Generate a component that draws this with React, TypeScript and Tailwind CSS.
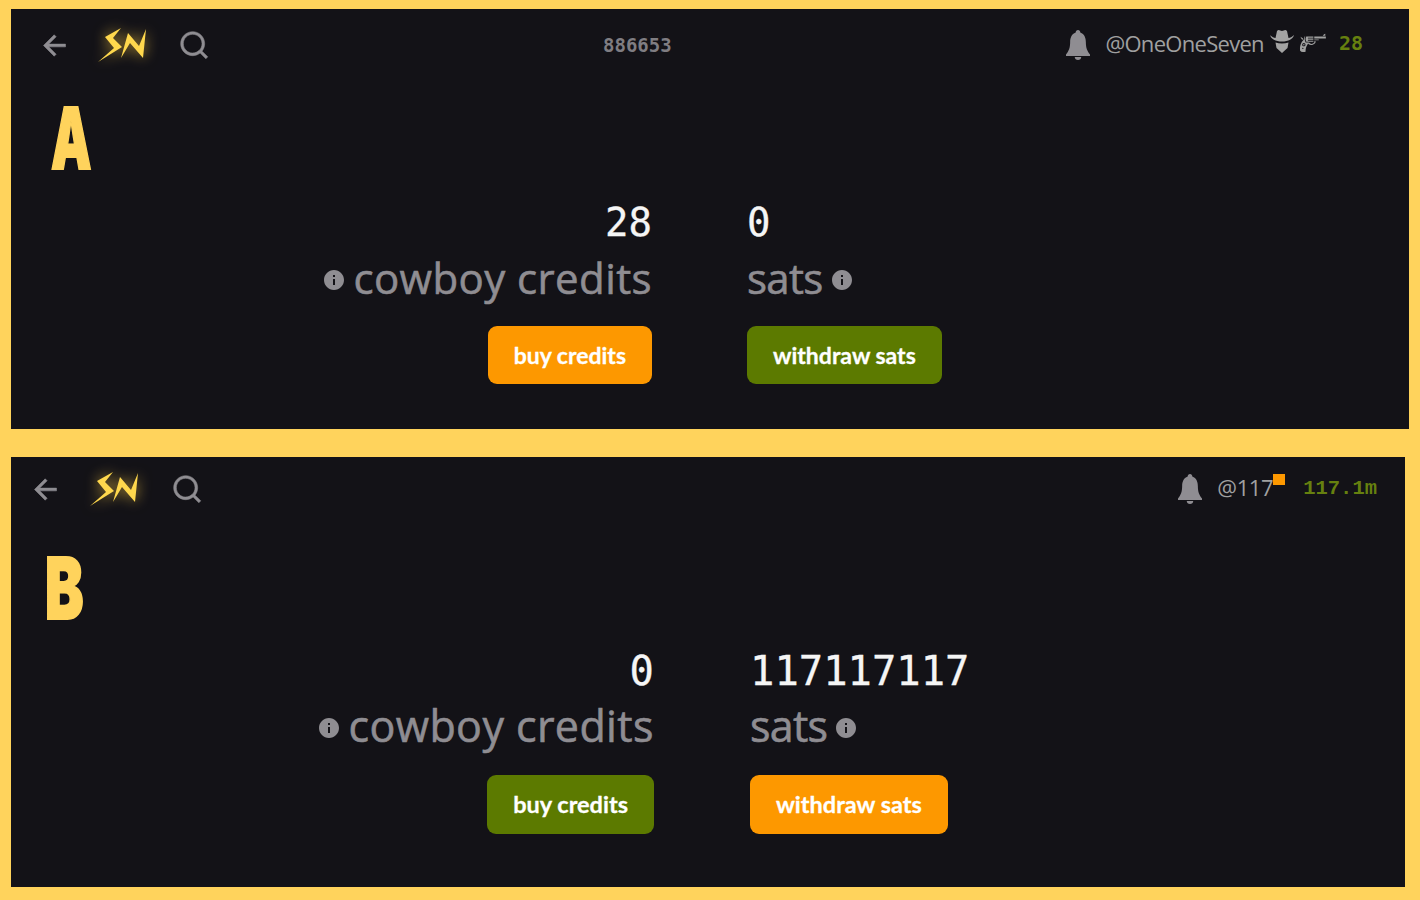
import React from 'react';
import { RiArrowLeftLine, RiInformationFill, RiSearchLine } from 'react-icons/ri';
import { GiRevolver } from 'react-icons/gi';

const Logo = () => (
  <svg width="48" height="34" viewBox="0 0 48 34" fill="#ffd84d" className="drop-shadow-[0_0_7px_rgba(255,205,70,0.75)]">
    <polygon points="23,0 7,9 16,20 0,34 24,19 15,10" />
    <polygon points="23,30 30,5 41,18 48,1 45,30 32,15" />
  </svg>
);

const Bell = () => (
  <svg width="24" height="30" viewBox="0 0 26 30" fill="currentColor" preserveAspectRatio="none">
    <path d="M13 0c1.500 0 2.500 1 2.500 2.500C20 4 21.500 8 21.500 12c0 6 1.500 9 4.500 12.500V26H0v-1.500C3 21 4.500 18 4.500 12c0-4 1.500-8 6-9.500C10.500 1 11.500 0 13 0z" />
    <path d="M9.500 27h7c0 1.800-1.500 3-3.500 3s-3.500-1.200-3.500-3z" />
  </svg>
);

// bandit hat next to the nym
const Cowboy = () => (
  <svg width="24" height="24" viewBox="0 0 24 24" fill="#a3a3a3">
    <path d="M0 6c2 2 4 3 5.500 3L7 2c2-2 3 0 5 0s3-2 5 0l1.500 7c1.500 0 3.500-1 5.500-3-1 4-5.500 6.500-12 6.500S1 10 0 6z" />
    <path d="M5.500 13.500c4 1.200 9 1.200 13 0L17.500 19 12 24l-5.500-5z" />
  </svg>
);

const Stat = ({ label, value, left, big }: { label: string; value: string; left?: boolean; big?: boolean }) => (
  <div className={left ? 'flex flex-col items-end' : 'flex flex-col items-start'}>
    <div className={`font-['DejaVu_Sans_Mono',monospace] leading-[44px] text-[#f5f5f5] [-webkit-text-stroke:0.3px_#f5f5f5] ${big ? 'text-[40.500px]' : 'text-[39px]'}`}>{value}</div>
    <div className={`mt-[4px] flex items-center gap-[7px] font-['Open_Sans',sans-serif] leading-[58px] text-[#8f8d92] [-webkit-text-stroke:0.6px_#8f8d92] ${big ? 'text-[43px]' : 'text-[42px]'}`}>
      {left && <RiInformationFill size={24} className="mt-1" />}
      <span className={left ? 'tracking-[0.4px]' : 'tracking-[-0.7px]'}>{label}</span>
      {!left && <RiInformationFill size={24} className="mt-1" />}
    </div>
  </div>
);

const Action = ({ text, color, big }: { text: string; color: string; big?: boolean }) => (
  <button className={`rounded-[9px] px-[26px] font-['Lato',sans-serif] font-bold text-white [-webkit-text-stroke:0.3px_#ffffff] ${color} ${big ? 'h-[59px] text-[23.500px]' : 'h-[58px] text-[23px]'}`}>
    {text}
  </button>
);

const TopA = () => (
  <div className="flex h-[72px] items-center pl-[27px] pr-[46px] text-[#8f8d92]">
    <RiArrowLeftLine size={33} stroke="currentColor" strokeWidth={0.4} />
    <div className="ml-[27px]"><Logo /></div>
    <RiSearchLine size={32} stroke="currentColor" strokeWidth={0.4} className="ml-[32px]" />
    <div className="ml-[393px] font-['DejaVu_Sans_Mono',monospace] text-[19px] font-bold text-[#7f7d82]">886653</div>
    <div className="ml-auto flex items-center">
      <Bell />
      <span className="ml-[15px] -mt-[4px] font-['Open_Sans',sans-serif] text-[22px] tracking-[-0.7px] text-[#a0a0a0]">@OneOneSeven</span>
      <span className="ml-[6px] -mt-[8px]"><Cowboy /></span>
      <GiRevolver size={28} className="ml-[5px] -mt-[8px] text-[#a0a0a0]" />
      <span className="ml-[12px] -mt-[5px] font-['DejaVu_Sans_Mono',monospace] text-[20px] font-bold text-[#66800f]">28</span>
    </div>
  </div>
);

const TopB = () => (
  <div className="flex h-[64px] items-center pl-[18px] pr-[28px] text-[#8f8d92]">
    <RiArrowLeftLine size={33} stroke="currentColor" strokeWidth={0.4} />
    <div className="ml-[28px]"><Logo /></div>
    <RiSearchLine size={32} stroke="currentColor" strokeWidth={0.4} className="ml-[33px]" />
    <div className="ml-auto flex items-center">
      <Bell />
      <span className="relative ml-[15px] -mt-[4px] font-['Open_Sans',sans-serif] text-[22px] tracking-[-0.4px] text-[#a0a0a0]">
        @117
        <span className="absolute -right-[12px] top-[3px] h-[11px] w-[12px] bg-[#fd9800]" />
      </span>
      <span className="ml-[30px] font-['Liberation_Mono',monospace] text-[20.500px] font-bold text-[#66800f]">117.1m</span>
    </div>
  </div>
);

const Letter = ({ text, className }: { text: string; className: string }) => (
  <div className={`origin-left font-['Inter',sans-serif] text-[85px] leading-[62px] font-black text-[#ffd35c] [-webkit-text-stroke:2px_#ffd35c] ${className}`}>
    {text}
  </div>
);

export default function App() {
  return (
    <div className="flex h-[900px] w-[1420px] flex-col bg-[#ffd35c] pt-[9px] pl-[11px]">
      {/* A */}
      <section className="h-[420px] w-[1398px] bg-[#131217]">
        <TopA />
        <Letter text="A" className="mt-[27px] ml-[40px] scale-x-[0.6]" />
        <div className="mt-[31px] flex">
          <div className="flex w-[641px] flex-col items-end">
            <Stat left label="cowboy credits" value="28" />
            <div className="mt-[19px]"><Action text="buy credits" color="bg-[#fd9800]" /></div>
          </div>
          <div className="ml-[95px] flex flex-col items-start">
            <Stat label="sats" value="0" />
            <div className="mt-[19px]"><Action text="withdraw sats" color="bg-[#5c7a00]" /></div>
          </div>
        </div>
      </section>

      {/* B */}
      <section className="mt-[28px] h-[430px] w-[1394px] bg-[#131217]">
        <TopB />
        <Letter text="B" className="mt-[37px] ml-[34px] scale-x-[0.68]" />
        <div className="mt-[29px] flex">
          <div className="flex w-[643px] flex-col items-end">
            <Stat big left label="cowboy credits" value="0" />
            <div className="mt-[20px]"><Action big text="buy credits" color="bg-[#5c7a00]" /></div>
          </div>
          <div className="ml-[96px] flex flex-col items-start">
            <Stat big label="sats" value="117117117" />
            <div className="mt-[20px]"><Action big text="withdraw sats" color="bg-[#fd9800]" /></div>
          </div>
        </div>
      </section>
    </div>
  );
}
